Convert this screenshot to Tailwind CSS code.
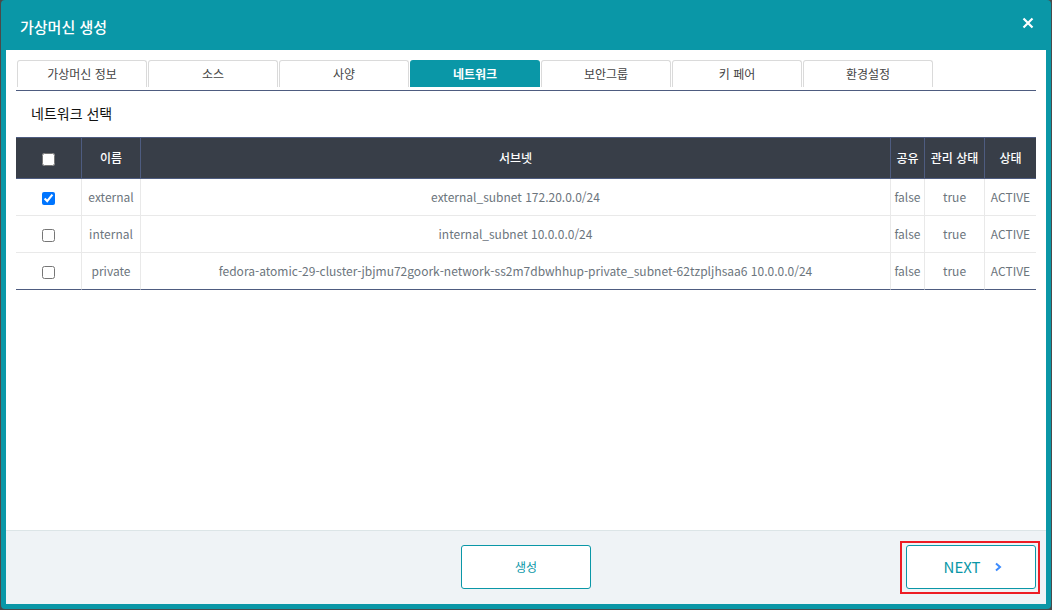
<!DOCTYPE html>
<html lang="ko">
<head>
<meta charset="utf-8">
<meta name="viewport" content="width=device-width, initial-scale=1">
<title>가상머신 생성</title>
<script src="https://cdn.jsdelivr.net/npm/@tailwindcss/browser@4"></script>
</head>
<body class="bg-[#4a4a4a] font-['Noto_Sans_CJK_KR',sans-serif]">
<div role="dialog" aria-labelledby="dialog-title" class="flex min-h-screen flex-col px-px pb-px">
  <div class="flex flex-1 flex-col rounded-sm bg-[#0a97a7] px-[5px] pb-[5px]">
    <header class="flex h-[50px] items-center justify-between pt-1 pr-3 pl-3.5">
      <h1 id="dialog-title" class="text-[15px] leading-6 font-medium text-white">가상머신 생성</h1>
      <button type="button" aria-label="닫기" class="mb-2 flex size-3 items-center justify-center text-white">
        <svg class="size-3" viewBox="0 0 12 12" fill="none" stroke="currentColor" stroke-width="2.2"><path d="M1.5 1.5l9 9M10.5 1.5l-9 9"/></svg>
      </button>
    </header>
    <main class="flex-1 bg-white px-2.5 pt-2.5">
      <nav class="flex h-[31px] gap-px border-b border-[#4e5c80] pl-px text-xs leading-[26px] text-[#444]">
        <button type="button" class="h-[27px] w-[130px] rounded-t-[3px] border border-b-0 border-[#dadada]">가상머신 정보</button>
        <button type="button" class="h-[27px] w-[130px] rounded-t-[3px] border border-b-0 border-[#dadada]">소스</button>
        <button type="button" class="h-[27px] w-[130px] rounded-t-[3px] border border-b-0 border-[#dadada]">사양</button>
        <button type="button" aria-current="page" class="h-[27px] w-[130px] rounded-t-[3px] bg-[#0a97a7] font-bold text-white">네트워크</button>
        <button type="button" class="h-[27px] w-[130px] rounded-t-[3px] border border-b-0 border-[#dadada]">보안그룹</button>
        <button type="button" class="h-[27px] w-[130px] rounded-t-[3px] border border-b-0 border-[#dadada]">키 페어</button>
        <button type="button" class="h-[27px] w-[130px] rounded-t-[3px] border border-b-0 border-[#dadada]">환경설정</button>
      </nav>
      <h2 class="h-[46px] pl-[15px] text-sm leading-[44px] text-[#111]">네트워크 선택</h2>
      <table class="w-full table-fixed border-separate border-spacing-0 text-center text-xs leading-5 text-[#6c757d]">
        <colgroup><col class="w-[66px]"><col class="w-[59px]"><col><col class="w-[34px]"><col class="w-[60px]"><col class="w-[51px]"></colgroup>
        <thead>
          <tr class="h-[42px] bg-[#383e48] text-white *:border-y *:border-r *:border-[#4e5c80] *:p-0 *:font-medium *:last:border-r-0">
            <th><input type="checkbox" aria-label="전체 선택" class="mx-auto mt-0.5 block size-[13px]"></th>
            <th>이름</th><th>서브넷</th><th>공유</th><th>관리 상태</th><th>상태</th>
          </tr>
        </thead>
        <tbody>
          <tr class="h-[37px] *:border-r *:border-b *:border-[#e9e9e9] *:p-0 *:last:border-r-0">
            <td><input type="checkbox" checked aria-label="external" class="mx-auto mt-0.5 block size-[13px]"></td>
            <td>external</td><td>external_subnet 172.20.0.0/24</td><td>false</td><td>true</td><td>ACTIVE</td>
          </tr>
          <tr class="h-[37px] *:border-r *:border-b *:border-[#e9e9e9] *:p-0 *:last:border-r-0">
            <td><input type="checkbox" aria-label="internal" class="mx-auto mt-0.5 block size-[13px]"></td>
            <td>internal</td><td>internal_subnet 10.0.0.0/24</td><td>false</td><td>true</td><td>ACTIVE</td>
          </tr>
          <tr class="h-[37px] *:border-r *:border-b *:border-r-[#e9e9e9] *:border-b-[#4e5c80] *:p-0 *:last:border-r-0">
            <td><input type="checkbox" aria-label="private" class="mx-auto mt-0.5 block size-[13px]"></td>
            <td>private</td><td>fedora-atomic-29-cluster-jbjmu72goork-network-ss2m7dbwhhup-private_subnet-62tzpljhsaa6 10.0.0.0/24</td><td>false</td><td>true</td><td>ACTIVE</td>
          </tr>
        </tbody>
      </table>
    </main>
    <footer class="grid grid-cols-3 border-t border-[#dce5e7] bg-[#eff3f6] px-2.5 pt-3.5 pb-[15px] text-[#0a97a7]">
      <button type="button" class="col-start-2 h-11 w-[130px] justify-self-center rounded-[3px] border border-[#0a97a7] bg-white text-xs">생성</button>
      <div class="relative justify-self-end">
        <button type="button" class="flex h-11 w-[130px] items-center justify-center gap-3.5 rounded-[3px] border border-[#0a97a7] bg-white pl-1 text-[15px]">NEXT
          <svg class="h-2.5 w-2" viewBox="0 0 8 10" fill="none" stroke="#3d8bfd" stroke-width="2"><path d="M2 1.5L6 5L2 8.5"/></svg>
        </button>
        <span class="pointer-events-none absolute -top-1 -right-1 -bottom-[5px] -left-1.5 border-2 border-[#ed1c24]"></span>
      </div>
    </footer>
  </div>
</div>
</body>
</html>
